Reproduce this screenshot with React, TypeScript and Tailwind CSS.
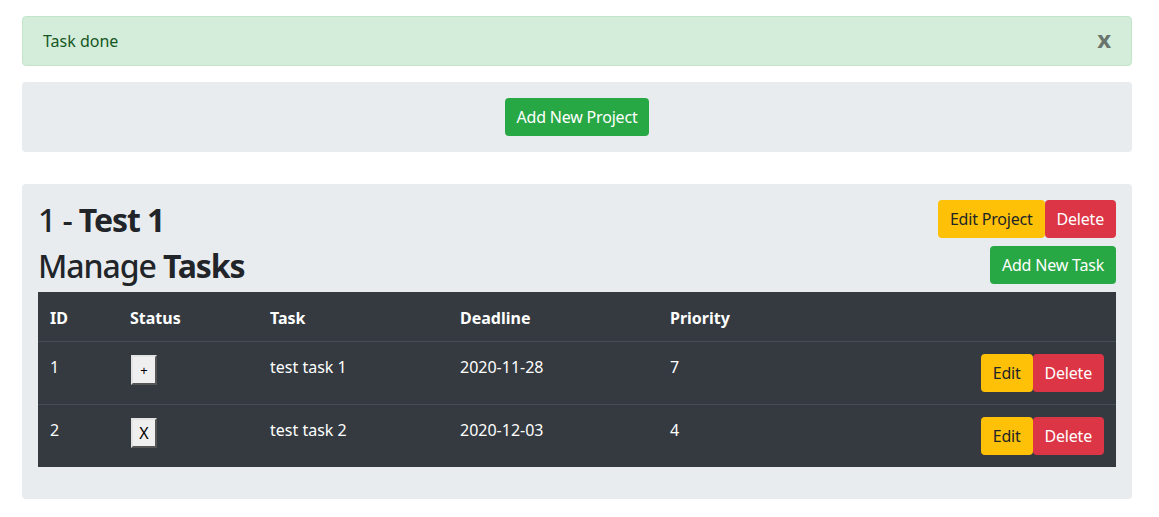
import React, { useState } from 'react';

interface Task {
  id: number;
  done: boolean;
  name: string;
  deadline: string;
  priority: number;
}

const tasks: Task[] = [
  { id: 1, done: false, name: 'test task 1', deadline: '2020-11-28', priority: 7 },
  { id: 2, done: true, name: 'test task 2', deadline: '2020-12-03', priority: 4 },
];

const btn = 'h-[38px] px-3 rounded-[4px] text-[16px] leading-6 whitespace-nowrap tracking-[-0.2px]';

export default function App() {
  const [showAlert, setShowAlert] = useState(true);

  return (
    <div
      className="min-h-[517px] bg-white text-[#212529]"
      style={{ fontFamily: '"Segoe UI", "Noto Sans", "Open Sans", sans-serif' }}
    >
      <div className="ml-[22px] w-[1110px] pt-4">
        {showAlert && (
          <div className="relative mb-4 rounded-[4px] border border-[#c3e6cb] bg-[#d4edda] px-5 py-3 text-[16px] leading-6 text-[#155724]">
            Task done
            <button
              onClick={() => setShowAlert(false)}
              className="absolute right-5 top-[10px] text-[24px] font-bold leading-6 text-black opacity-50"
            >
              x
            </button>
          </div>
        )}

        <div className="mb-8 flex justify-center rounded-[4px] bg-[#e9ecef] p-4">
          <button className={`${btn} bg-[#28a745] text-white`}>Add New Project</button>
        </div>

        <div className="rounded-[4px] bg-[#e9ecef] p-4">
          <div className="mb-2 flex h-[38px] items-center justify-between">
            <h2 className="pt-[2px] text-[32px] leading-[38px] font-medium tracking-[-1.1px]">
              1 - <span className="font-bold">Test 1</span>
            </h2>
            <div className="flex">
              <button className={`${btn} bg-[#ffc107] text-[#212529]`}>Edit Project</button>
              <button className={`${btn} bg-[#dc3545] text-white`}>Delete</button>
            </div>
          </div>
          <div className="mb-2 flex h-[38px] items-center justify-between">
            <h2 className="pt-[2px] text-[32px] leading-[38px] font-medium tracking-[-1.1px]">
              Manage <span className="font-bold">Tasks</span>
            </h2>
            <button className={`${btn} bg-[#28a745] text-white`}>Add New Task</button>
          </div>

          <table className="mb-4 w-full border-collapse bg-[#343a40] text-left text-[16px] leading-6 text-white">
            <thead>
              <tr className="border-b border-[#454d55]">
                <th className="w-[80px] px-3 pt-[14px] pb-[11px] font-bold">ID</th>
                <th className="w-[140px] px-3 pt-[14px] pb-[11px] font-bold">Status</th>
                <th className="w-[190px] px-3 pt-[14px] pb-[11px] font-bold">Task</th>
                <th className="w-[210px] px-3 pt-[14px] pb-[11px] font-bold">Deadline</th>
                <th className="px-3 pt-[14px] pb-[11px] font-bold">Priority</th>
                <th className="px-3 pt-[14px] pb-[11px]"></th>
              </tr>
            </thead>
            <tbody>
              {tasks.map((t, i) => (
                <tr key={t.id} className={i > 0 ? 'border-t border-[#454d55]' : ''}>
                  <td className="px-3 pt-[13px] pb-3 align-top">{t.id}</td>
                  <td className="px-3 py-3 align-top">
                    <button className="ml-px mt-px flex h-[30px] w-[26px] items-center justify-center border-2 border-t-[#e3e3e3] border-l-[#e3e3e3] border-b-[#555] border-r-[#555] bg-[#efefef] text-black leading-none">
                      {t.done ? <span className="text-[16px]">X</span> : <span className="text-[13px]">+</span>}
                    </button>
                  </td>
                  <td className="px-3 pt-[13px] pb-3 align-top">{t.name}</td>
                  <td className="px-3 pt-[13px] pb-3 align-top">{t.deadline}</td>
                  <td className="px-3 pt-[13px] pb-3 align-top">{t.priority}</td>
                  <td className="px-3 py-3 align-top">
                    <div className="flex justify-end">
                      <button className={`${btn} bg-[#ffc107] text-[#212529]`}>Edit</button>
                      <button className={`${btn} bg-[#dc3545] text-white`}>Delete</button>
                    </div>
                  </td>
                </tr>
              ))}
            </tbody>
          </table>
        </div>
      </div>
    </div>
  );
}
